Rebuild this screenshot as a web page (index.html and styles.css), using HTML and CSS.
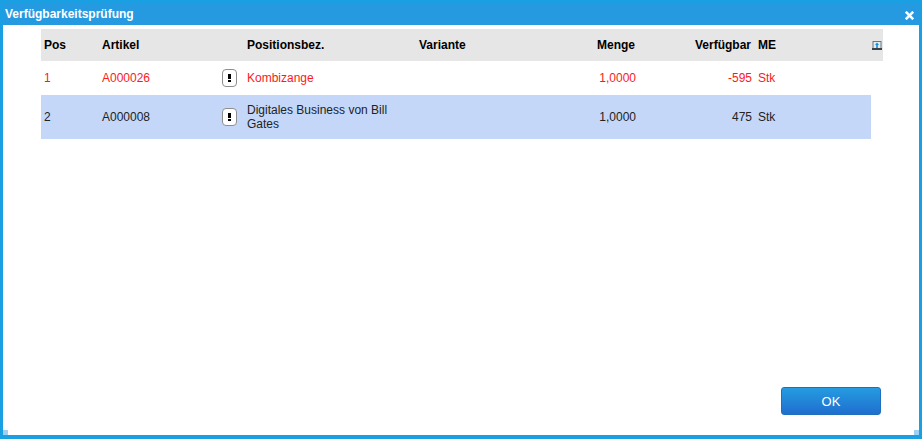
FILE: index.html
```html
<!DOCTYPE html>
<html lang="de">
<head>
<meta charset="utf-8">
<title>Verfügbarkeitsprüfung</title>
<link rel="stylesheet" href="styles.css">
</head>
<body>
<div class="dialog">
  <div class="titlebar">
    <span class="title">Verfügbarkeitsprüfung</span>
    <svg class="close" width="9" height="9" viewBox="0 0 9 9"><path d="M0.8 0.8l7.4 7.4M8.2 0.8l-7.4 7.4" stroke="#fff" stroke-width="2.6" fill="none"/></svg>
  </div>
  <div class="body">
    <div class="grid-wrap">
      <div class="row head">
        <span>Pos</span><span>Artikel</span><span></span><span>Positionsbez.</span><span>Variante</span>
        <span class="num">Menge</span><span class="num avail-head">Verfügbar</span><span>ME</span>
        <svg class="export" width="10" height="9" viewBox="0 0 10 9"><rect x="1" y="0.5" width="8" height="7" fill="#e4eaee" stroke="#6a7680"/><rect x="0" y="7" width="10" height="2" fill="#39434c"/><path d="M5 1.5L3 4h1.2v3h1.6V4H7z" fill="#0f8fd8"/></svg>
      </div>
      <div class="row alert">
        <span>1</span><span>A000026</span><span class="badge"><svg width="3" height="8" viewBox="0 0 3 8"><path d="M0 0h3v5H0zM0 6h3v2H0z" fill="#000"/></svg></span><span>Kombizange</span><span></span>
        <span class="num qty">1,0000</span><span class="num">-595</span><span>Stk</span>
      </div>
      <div class="row selected">
        <span>2</span><span>A000008</span><span class="badge"><svg width="3" height="8" viewBox="0 0 3 8"><path d="M0 0h3v5H0zM0 6h3v2H0z" fill="#000"/></svg></span><span>Digitales Business von Bill Gates</span><span></span>
        <span class="num qty">1,0000</span><span class="num">475</span><span>Stk</span>
      </div>
    </div>
    <div class="footer"><button class="ok">OK</button></div>
  </div>
  <span class="grip grip-left"></span>
  <span class="grip grip-right"></span>
</div>
</body>
</html>
```
FILE: styles.css
```css
* { box-sizing: border-box; }
html, body { margin: 0; height: 100%; }
body { font: 12px "Liberation Sans", Arial, sans-serif; color: #222; background: #fff; }
.dialog {
  position: relative;
  width: 922px; height: 439px; display: flex; flex-direction: column;
  background: #1f9ae0; border: solid #1a9fe2; border-width: 3px 3px 4px 3px;
}
.titlebar {
  height: 22px; flex: none; display: flex; align-items: center; justify-content: space-between;
  padding: 0 5px 0 2px; background: #259ae0; color: #fff; font-weight: bold; font-size: 12px;
}
.close { display: block; margin-top: 2px; }
.body { flex: 1; background: #fff; display: flex; flex-direction: column; padding: 4px 0 0 38px; }
.grid-wrap { flex: 1; width: 842px; }
.row {
  display: grid;
  grid-template-columns: 58px 120px 25px 172px 100px 116px 117px 1fr;
  align-items: center; padding-left: 3px; width: 830px;
}
.row .num { text-align: right; }
.row .qty { position: relative; left: 1px; }
.row .avail-head { padding-right: 1px; }
.head {
  position: relative; width: 842px; height: 32px; background: #e6e6e6; color: #000; font-weight: bold;
}
.export { position: absolute; right: 1px; top: 12px; }
.alert { height: 34px; color: #fa1a1a; }
.selected { height: 44px; background: #c5d7f8; }
.row > span:nth-child(8) { padding-left: 6px; }
.selected > span:nth-child(4) { padding-right: 20px; line-height: 14px; }
.badge {
  width: 15px; height: 18px; border: 1px solid #8e8e8e; border-radius: 4px; background: #fff;
  display: flex; align-items: center; justify-content: center;
  justify-self: start;
}
.badge svg { display: block; }
.footer { flex: none; display: flex; justify-content: flex-end; padding: 0 38px 20px 0; }
.ok {
  width: 100px; height: 28px; padding: 0; border: 1px solid #1f6fc0; border-radius: 3px;
  background: linear-gradient(#259be0, #1f6fcf); color: #fff; font: 13px "Liberation Sans", Arial, sans-serif;
}
.grip { position: absolute; bottom: 0; width: 5px; height: 5px; background: #9dd0f2; }
.grip-left { left: 0; }
.grip-right { right: 0; }
```
